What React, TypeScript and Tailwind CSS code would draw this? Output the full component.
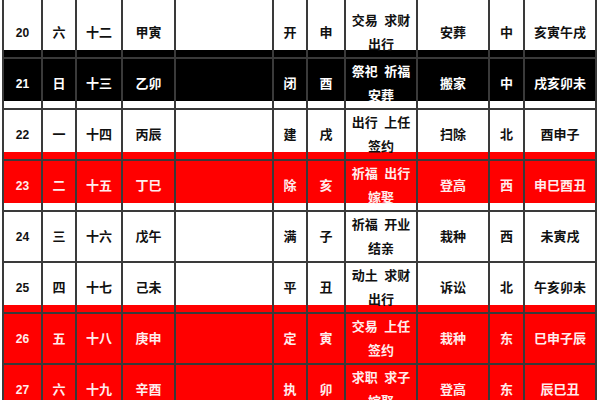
type Row = {
  day: string;
  week: string;
  lunar: string;
  ganzhi: string;
  jian: string;
  zhi: string;
  yi: [string, string];
  ji: string;
  fang: string;
  shi: string;
  tone: 'white' | 'black' | 'red';
};

const rows: Row[] = [
  { day: '20', week: '六', lunar: '十二', ganzhi: '甲寅', jian: '开', zhi: '申', yi: ['交易 求财', '出行'], ji: '安葬', fang: '中', shi: '亥寅午戌', tone: 'white' },
  { day: '21', week: '日', lunar: '十三', ganzhi: '乙卯', jian: '闭', zhi: '酉', yi: ['祭祀 祈福', '安葬'], ji: '搬家', fang: '中', shi: '戌亥卯未', tone: 'black' },
  { day: '22', week: '一', lunar: '十四', ganzhi: '丙辰', jian: '建', zhi: '戌', yi: ['出行 上任', '签约'], ji: '扫除', fang: '北', shi: '酉申子', tone: 'white' },
  { day: '23', week: '二', lunar: '十五', ganzhi: '丁巳', jian: '除', zhi: '亥', yi: ['祈福 出行', '嫁娶'], ji: '登高', fang: '西', shi: '申巳酉丑', tone: 'red' },
  { day: '24', week: '三', lunar: '十六', ganzhi: '戊午', jian: '满', zhi: '子', yi: ['祈福 开业', '结亲'], ji: '栽种', fang: '西', shi: '未寅戌', tone: 'white' },
  { day: '25', week: '四', lunar: '十七', ganzhi: '己未', jian: '平', zhi: '丑', yi: ['动土 求财', '出行'], ji: '诉讼', fang: '北', shi: '午亥卯未', tone: 'white' },
  { day: '26', week: '五', lunar: '十八', ganzhi: '庚申', jian: '定', zhi: '寅', yi: ['交易 上任', '签约'], ji: '栽种', fang: '东', shi: '巳申子辰', tone: 'red' },
  { day: '27', week: '六', lunar: '十九', ganzhi: '辛酉', jian: '执', zhi: '卯', yi: ['求职 求子', '嫁娶'], ji: '登高', fang: '东', shi: '辰巳丑', tone: 'red' },
];

const toneClass = {
  white: 'bg-white text-[#111]',
  black: 'bg-black text-white',
  red: 'bg-[#ff0000] text-[#ffecec]',
};

function Cell({ children }: { children?: React.ReactNode }) {
  return (
    <div className="flex flex-col items-center justify-center pt-[10px] border-r-2 border-b-2 border-[#3a3a3a] leading-[24px] whitespace-nowrap">
      {children}
    </div>
  );
}

export default function App() {
  return (
    <div className="w-[600px] h-[400px] overflow-hidden bg-white">
      <div
        className="ml-[2px] -mt-px w-fit border-l-2 border-[#3a3a3a] text-[13px] font-bold"
        style={{ fontFamily: '"Liberation Sans", "Noto Sans CJK SC", sans-serif' }}
      >
        {rows.map(r => (
          <div
            key={r.day}
            className={`grid h-[51px] grid-cols-[39px_34px_46px_53px_98px_34px_38px_72px_72px_35px_72px] ${toneClass[r.tone]}`}
          >
            <Cell><span className="text-[12px]">{r.day}</span></Cell>
            <Cell>{r.week}</Cell>
            <Cell>{r.lunar}</Cell>
            <Cell>{r.ganzhi}</Cell>
            <Cell />
            <Cell>{r.jian}</Cell>
            <Cell>{r.zhi}</Cell>
            <Cell>
              <span className="[word-spacing:3px]">{r.yi[0]}</span>
              <span>{r.yi[1]}</span>
            </Cell>
            <Cell>{r.ji}</Cell>
            <Cell>{r.fang}</Cell>
            <Cell>{r.shi}</Cell>
          </div>
        ))}
      </div>
    </div>
  );
}
